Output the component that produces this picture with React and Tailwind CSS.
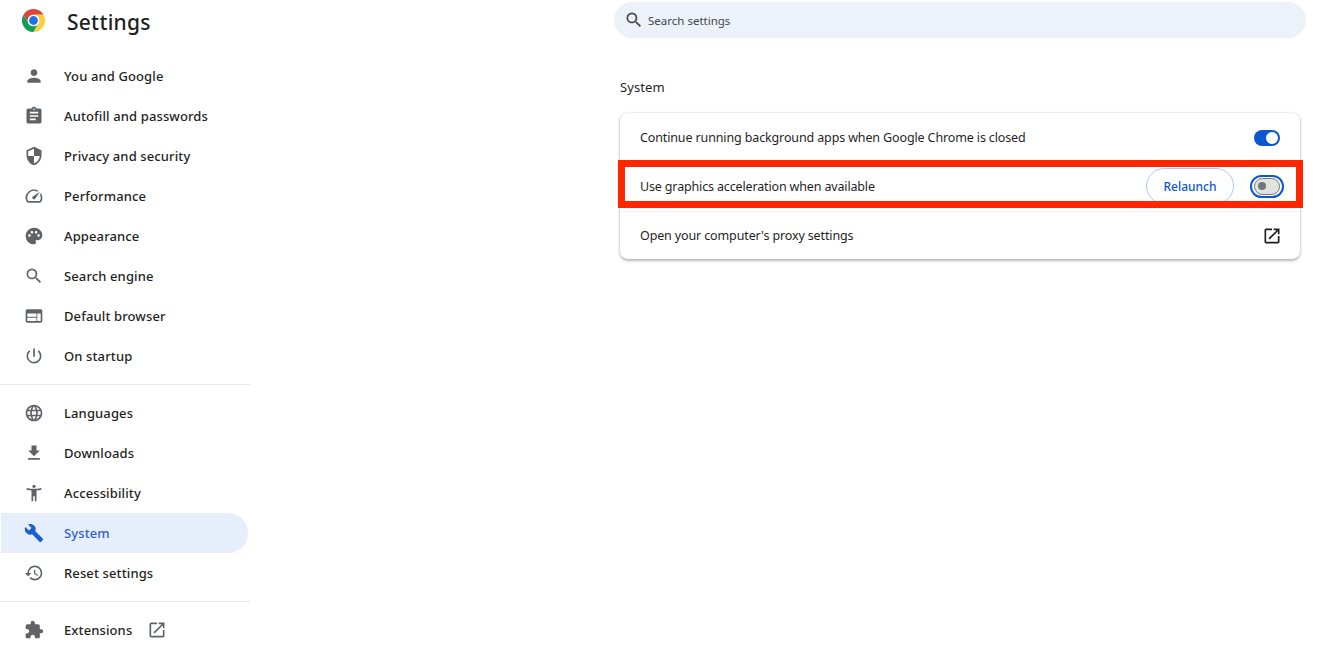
import React from "react";
import {
  MdPerson, MdAssignment, MdSecurity, MdSpeed, MdPalette, MdSearch, MdWeb,
  MdPowerSettingsNew, MdLanguage, MdFileDownload, MdAccessibilityNew, MdBuild,
  MdRestore, MdExtension, MdOpenInNew,
} from "react-icons/md";

function ChromeLogo() {
  return (
    <svg width="23" height="23" viewBox="3 3 42 42" className="block shrink-0">
      <path fill="#DB4437" d="M24 13.5H42.19A21 21 0 0 0 5.81 13.5L14.91 29.25A10.5 10.5 0 0 1 24 13.5Z" />
      <path fill="#0F9D58" d="M14.91 29.25L5.81 13.5A21 21 0 0 0 24 45L33.09 29.25A10.5 10.5 0 0 1 14.91 29.25Z" />
      <path fill="#FFCD40" d="M24 13.5H42.19A21 21 0 0 1 24 45L33.09 29.25A10.5 10.5 0 0 0 24 13.5Z" />
      <circle cx="24" cy="24" r="10.5" fill="#fff" />
      <circle cx="24" cy="24" r="8" fill="#1A73E8" />
    </svg>
  );
}

function NavItem({ icon: Icon, label, active, extra }) {
  return (
    <div className={`flex h-10 items-center pl-6 ${active ? "ml-px w-[247px] rounded-r-[20px] bg-[#e6eefc] text-[#2f5fd0]" : "w-[248px] text-[#1f1f1f]"}`}>
      <Icon className={`shrink-0 text-[20px] ${active ? "-ml-px text-[#1a5fd0]" : "text-[#5f6368]"}`} />
      <span className="ml-5 pt-0.5 text-[13px] font-medium tracking-[0.12px]">{label}</span>
      {extra}
    </div>
  );
}

function Divider() {
  return <div className="my-2 h-px w-[250px] bg-[#e8e8e8]" />;
}

export default function App() {
  return (
    <div className="relative flex h-[648px] overflow-hidden bg-white font-['Noto_Sans','Open_Sans',sans-serif] text-[#1f1f1f]">
      <aside className="w-[250px] shrink-0">
        <header className="flex h-[56px] items-start pl-[22px] pt-[9px]">
          <ChromeLogo />
          <h1 className="ml-[22px] text-[21px] font-medium leading-[26px] tracking-[0.25px]">Settings</h1>
        </header>
        <NavItem icon={MdPerson} label="You and Google" />
        <NavItem icon={MdAssignment} label="Autofill and passwords" />
        <NavItem icon={MdSecurity} label="Privacy and security" />
        <NavItem icon={MdSpeed} label="Performance" />
        <NavItem icon={MdPalette} label="Appearance" />
        <NavItem icon={MdSearch} label="Search engine" />
        <NavItem icon={MdWeb} label="Default browser" />
        <NavItem icon={MdPowerSettingsNew} label="On startup" />
        <Divider />
        <NavItem icon={MdLanguage} label="Languages" />
        <NavItem icon={MdFileDownload} label="Downloads" />
        <NavItem icon={MdAccessibilityNew} label="Accessibility" />
        <NavItem icon={MdBuild} label="System" active />
        <NavItem icon={MdRestore} label="Reset settings" />
        <Divider />
        <NavItem icon={MdExtension} label="Extensions" extra={<MdOpenInNew className="ml-[15px] text-[20px] text-[#5f6368]" />} />
      </aside>

      <main className="ml-[364px] w-[692px] shrink-0 pt-0.5">
        <div className="flex h-9 items-center rounded-[18px] bg-[#edf2fa] pl-[10px]">
          <MdSearch className="text-[20px] text-[#444746]" />
          <span className="ml-1 pt-0.5 text-[11.5px] text-[#444746]">Search settings</span>
        </div>
        <h2 className="ml-1.5 mt-10 text-[13px] font-normal leading-[18px] tracking-[0.1px] text-[#1f1f1f]">System</h2>
        <section className="ml-1.5 mt-[17px] w-[680px] rounded-lg bg-white shadow-[0_2px_3px_0_rgba(60,64,67,0.35),0_0_2px_0_rgba(60,64,67,0.25)]">
          <div className="flex h-[49px] items-center pl-5 pr-5">
            <span className="flex-1 pt-0.5 text-[12.5px] tracking-[-0.13px]">Continue running background apps when Google Chrome is closed</span>
            <div className="flex h-[16px] w-[26px] items-center justify-end rounded-full bg-[#0b57d0] pr-[2px]">
              <div className="h-3 w-3 rounded-full bg-white" />
            </div>
          </div>
          <div className="flex h-[49px] items-center border-t border-[#f0f0f0] pl-5 pr-4">
            <span className="flex-1 text-[12.5px] tracking-[-0.15px]">Use graphics acceleration when available</span>
            <button className="-mt-0.5 flex h-9 w-[88px] items-center justify-center rounded-[18px] border border-[#a8c7fa] pt-px text-[12px] font-medium text-[#0b57d0]">Relaunch</button>
            <div className="-mt-0.5 ml-4 flex h-[23px] w-[34px] items-center justify-center rounded-full border-2 border-[#0b57d0] bg-white">
              <div className="flex h-[17px] w-[26px] items-center rounded-full border border-[#747775] bg-[#e1e3e1] pl-[3px]">
                <div className="h-2 w-2 rounded-full bg-[#747775]" />
              </div>
            </div>
          </div>
          <div className="flex h-[48px] items-center border-t border-[#f0f0f0] pl-5 pr-[18px]">
            <span className="flex-1 pt-0.5 text-[12.5px] tracking-[-0.13px]">Open your computer's proxy settings</span>
            <MdOpenInNew className="text-[20px] text-[#1f1f1f]" />
          </div>
        </section>
      </main>

      <div className="pointer-events-none absolute left-[618px] top-[160px] h-[48px] w-[685px] border-[7px] border-[#ff2600]" />
    </div>
  );
}
